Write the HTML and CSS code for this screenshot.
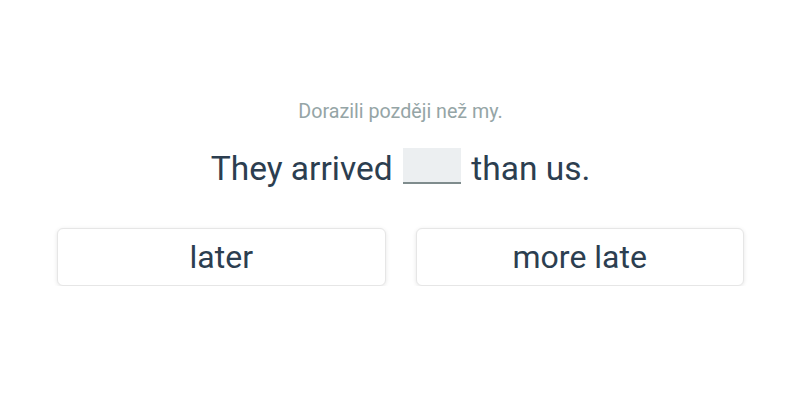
FILE: index.html
```html
<!DOCTYPE html>
<html lang="en">
<head>
<meta charset="utf-8">
<link rel="stylesheet" href="styles.css">
</head>
<body>
<main class="exercise">
  <p class="hint">Dorazili později než my.</p>
  <p class="sentence">They arrived <span class="blank"></span> than us.</p>
  <div class="options">
    <button class="option">later</button>
    <button class="option">more late</button>
  </div>
</main>
</body>
</html>
```
FILE: styles.css
```css
html, body {
  margin: 0;
  padding: 0;
  background: #ffffff;
}
body {
  font-family: Roboto, "Liberation Sans", sans-serif;
  color: #2c3e50;
}
.exercise {
  display: flex;
  flex-direction: column;
  align-items: center;
  padding: 98px 56px 0 57px;
}
.hint {
  margin: 0;
  font-size: 19.7px;
  line-height: 28px;
  color: #95a5a6;
}
.sentence {
  margin: 21px 0 0;
  font-size: 33.5px;
  line-height: 44px;
  color: #2c3e50;
  display: flex;
  align-items: center;
  white-space: pre;
}
.blank {
  display: inline-block;
  align-self: flex-start;
  width: 58px;
  height: 34px;
  background: #eceff1;
  border-bottom: 2px solid #7f8c8d;
  margin: 1px 2px 0;
}
.options {
  align-self: stretch;
  display: grid;
  grid-template-columns: 1fr 1fr;
  gap: 30px;
  margin-top: 37px;
}
.option {
  height: 58px;
  background: #ffffff;
  border: 1px solid #e6e6e6;
  border-radius: 6px;
  box-shadow: 0 1px 4px rgba(0,0,0,0.10);
  font-family: Roboto, "Liberation Sans", sans-serif;
  font-size: 32px;
  color: #2c3e50;
  padding: 0;
}
```
